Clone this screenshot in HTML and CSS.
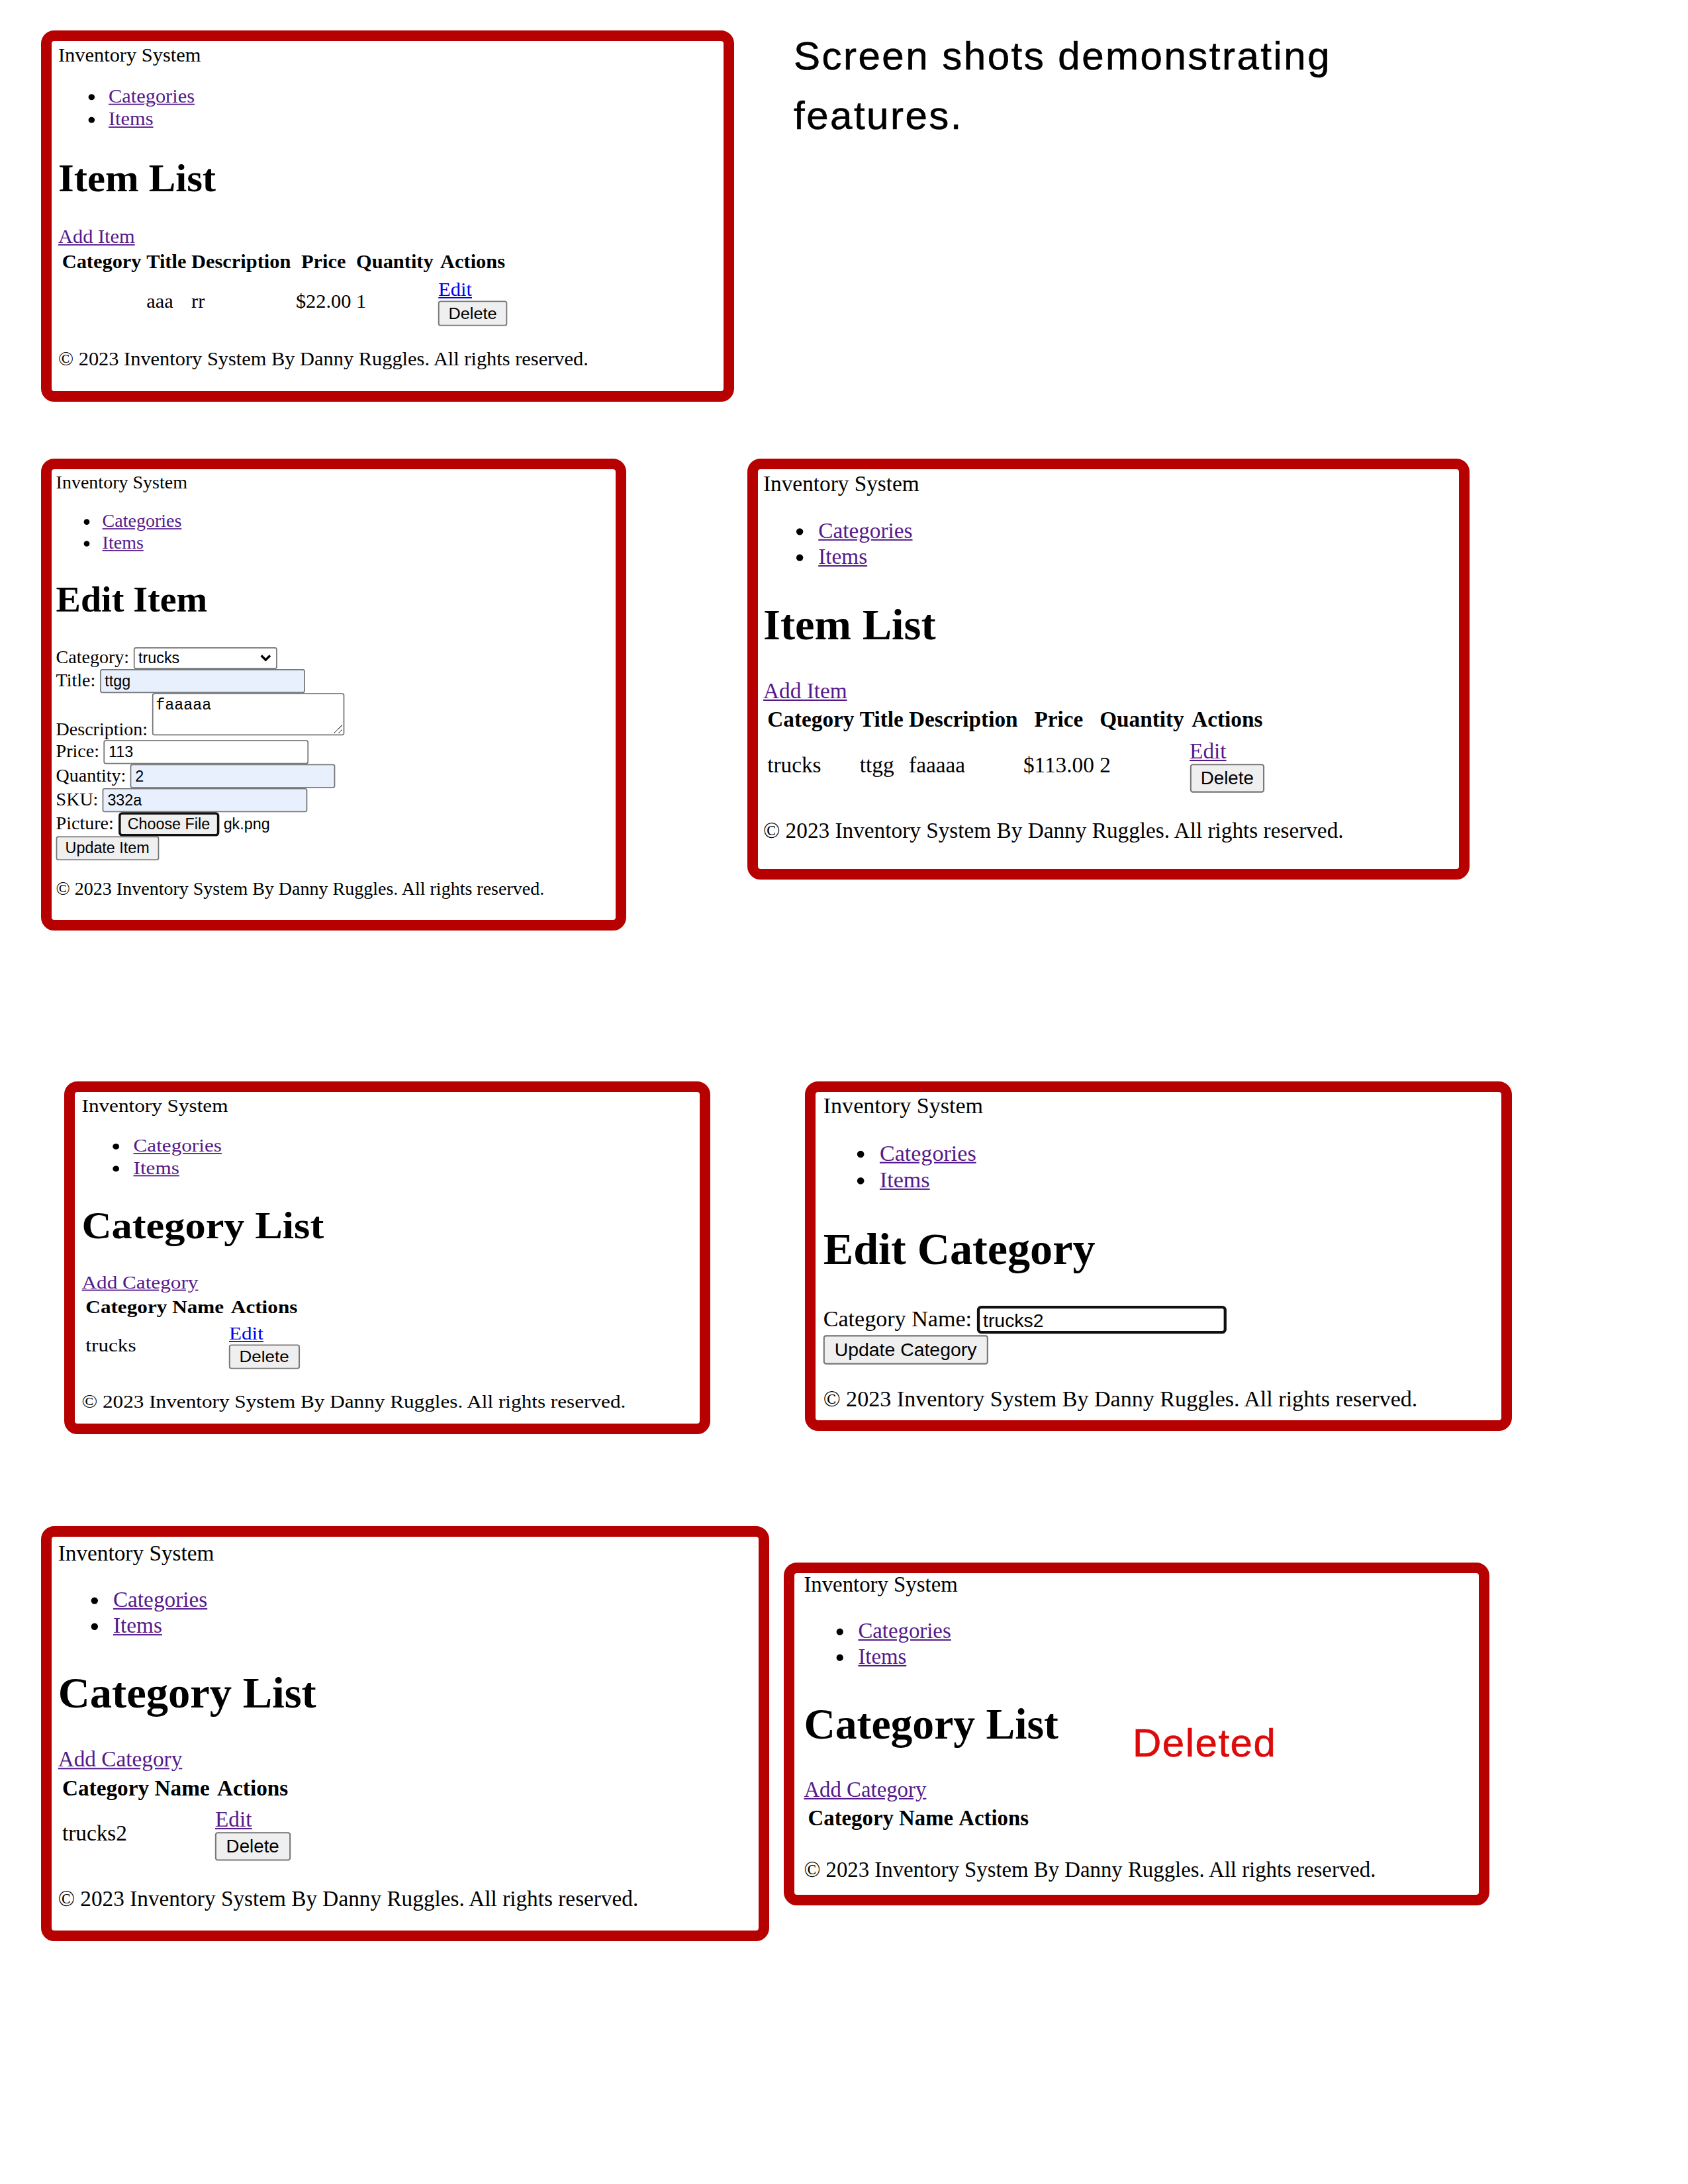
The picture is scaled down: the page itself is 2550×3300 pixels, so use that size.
FILE: index.html
```html
<!DOCTYPE html>
<html lang="en">
<head>
<meta charset="utf-8">
<title>Inventory System – screen shots</title>
<link rel="stylesheet" href="styles.css">
</head>
<body>
<main class="doc">

  <section class="row row-1">
    <div class="shot s1">
      <div class="page">
        <div class="brand">Inventory System</div>
        <ul class="nav"><li><a class="v" href="#">Categories</a></li><li><a class="v" href="#">Items</a></li></ul>
        <h1>Item List</h1>
        <a class="v" href="#">Add Item</a>
        <table>
          <thead><tr><th>Category</th><th>Title</th><th>Description</th><th>Price</th><th>Quantity</th><th>Actions</th></tr></thead>
          <tbody><tr><td></td><td>aaa</td><td>rr</td><td>$22.00</td><td>1</td><td><a href="#">Edit</a><form class="del"><button type="button" class="btn">Delete</button></form></td></tr></tbody>
        </table>
        <footer><p>© 2023 Inventory System By Danny Ruggles. All rights reserved.</p></footer>
      </div>
    </div>
    <h2 class="doc-title">Screen shots demonstrating<br>features.</h2>
  </section>

  <section class="row row-2">
    <div class="shot s2">
      <div class="page">
        <div class="brand">Inventory System</div>
        <ul class="nav"><li><a class="v" href="#">Categories</a></li><li><a class="v" href="#">Items</a></li></ul>
        <h1>Edit Item</h1>
        <form class="edit">
          <div class="frow first"><label>Category:</label> <span class="select">trucks<svg class="chev" viewBox="0 0 10 7" width="10" height="7"><path d="M1.2 1.2 L5 5 L8.8 1.2" fill="none" stroke="#000" stroke-width="2"/></svg></span></div>
          <div class="frow"><label>Title:</label> <input class="field auto" type="text" value="ttgg"></div>
          <div class="frow"><label>Description:</label> <textarea class="area">faaaaa</textarea></div>
          <div class="frow"><label>Price:</label> <input class="field" type="text" value="113"></div>
          <div class="frow"><label>Quantity:</label> <input class="field auto" type="text" value="2"></div>
          <div class="frow"><label>SKU:</label> <input class="field auto" type="text" value="332a"></div>
          <div class="frow"><label>Picture:</label> <span class="file"><button type="button" class="btn focus">Choose File</button> gk.png</span></div>
          <div class="frow"><button type="button" class="btn">Update Item</button></div>
        </form>
        <footer><p>© 2023 Inventory System By Danny Ruggles. All rights reserved.</p></footer>
      </div>
    </div>

    <div class="shot s3">
      <div class="page">
        <div class="brand">Inventory System</div>
        <ul class="nav"><li><a class="v" href="#">Categories</a></li><li><a class="v" href="#">Items</a></li></ul>
        <h1>Item List</h1>
        <a class="v" href="#">Add Item</a>
        <table>
          <thead><tr><th>Category</th><th>Title</th><th>Description</th><th>Price</th><th>Quantity</th><th>Actions</th></tr></thead>
          <tbody><tr><td>trucks</td><td>ttgg</td><td>faaaaa</td><td>$113.00</td><td>2</td><td><a class="v" href="#">Edit</a><form class="del"><button type="button" class="btn">Delete</button></form></td></tr></tbody>
        </table>
        <footer><p>© 2023 Inventory System By Danny Ruggles. All rights reserved.</p></footer>
      </div>
    </div>
  </section>

  <section class="row row-3">
    <div class="shot s4">
      <div class="page">
        <div class="brand">Inventory System</div>
        <ul class="nav"><li><a class="v" href="#">Categories</a></li><li><a class="v" href="#">Items</a></li></ul>
        <h1>Category List</h1>
        <a class="v" href="#">Add Category</a>
        <table>
          <thead><tr><th>Category Name</th><th>Actions</th></tr></thead>
          <tbody><tr><td>trucks</td><td><a href="#">Edit</a><form class="del"><button type="button" class="btn">Delete</button></form></td></tr></tbody>
        </table>
        <footer><p>© 2023 Inventory System By Danny Ruggles. All rights reserved.</p></footer>
      </div>
    </div>

    <div class="shot s5">
      <div class="page">
        <div class="brand">Inventory System</div>
        <ul class="nav"><li><a class="v" href="#">Categories</a></li><li><a class="v" href="#">Items</a></li></ul>
        <h1>Edit Category</h1>
        <form class="edit edit-cat">
          <div class="frow"><label>Category Name:</label> <input class="field focus-field" type="text" value="trucks2"></div>
          <div class="frow"><button type="button" class="btn">Update Category</button></div>
        </form>
        <footer><p>© 2023 Inventory System By Danny Ruggles. All rights reserved.</p></footer>
      </div>
    </div>
  </section>

  <section class="row row-4">
    <div class="shot s6">
      <div class="page">
        <div class="brand">Inventory System</div>
        <ul class="nav"><li><a class="v" href="#">Categories</a></li><li><a class="v" href="#">Items</a></li></ul>
        <h1>Category List</h1>
        <a class="v" href="#">Add Category</a>
        <table>
          <thead><tr><th>Category Name</th><th>Actions</th></tr></thead>
          <tbody><tr><td>trucks2</td><td><a class="v" href="#">Edit</a><form class="del"><button type="button" class="btn">Delete</button></form></td></tr></tbody>
        </table>
        <footer><p>© 2023 Inventory System By Danny Ruggles. All rights reserved.</p></footer>
      </div>
    </div>

    <div class="shot s7">
      <div class="page">
        <div class="brand">Inventory System</div>
        <ul class="nav"><li><a class="v" href="#">Categories</a></li><li><a class="v" href="#">Items</a></li></ul>
        <h1>Category List</h1>
        <a class="v" href="#">Add Category</a>
        <table>
          <thead><tr><th>Category Name</th><th>Actions</th></tr></thead>
          <tbody></tbody>
        </table>
        <footer><p>© 2023 Inventory System By Danny Ruggles. All rights reserved.</p></footer>
      </div>
      <span class="deleted">Deleted</span>
    </div>
  </section>

</main>
</body>
</html>
```

FILE: styles.css
```css
html, body {
  margin: 0;
  padding: 0;
  background: #fff;
}

.doc {
  width: 2550px;
  min-height: 3300px;
  padding-top: 46px;
  box-sizing: border-box;
  overflow: hidden;
}

.row {
  display: flex;
  align-items: flex-start;
}

.row-2 { margin-top: 86px; }
.row-3 { margin-top: 228px; }
.row-4 { margin-top: 139px; }

.doc-title {
  margin: -6px 0 0 90px;
  font: 400 60px/90px "Liberation Sans", Arial, sans-serif;
  letter-spacing: 2.5px;
  color: #000;
  -webkit-text-stroke: 0.6px #000;
}

/* screenshot frames */
.shot {
  position: relative;
  flex: none;
  box-sizing: border-box;
  border: 16px solid #b70000;
  border-radius: 20px;
  background: #fff;
  overflow: hidden;
}

.s1 { width: 1047px; height: 561px; margin-left: 62px;
  --tx: 10px; --ty: 5.8px; --sx: 1.9; --sy: 1.815; }
.s2 { width: 884px; height: 713px; margin-left: 62px;
  --tx: 6.6px; --ty: 4.4px; --sx: 1.75; --sy: 1.73; }
.s3 { width: 1091px; height: 636px; margin-left: 183px;
  --tx: 8px; --ty: 4.3px; --sx: 2.08; --sy: 2.07; }
.s4 { width: 976px; height: 533px; margin-left: 97px;
  --tx: 10.5px; --ty: 5.6px; --sx: 1.95; --sy: 1.765; }
.s5 { width: 1068px; height: 528px; margin-left: 143px;
  --tx: 11.7px; --ty: 2.3px; --sx: 2.13; --sy: 2.11; }
.s6 { width: 1100px; height: 627px; margin-left: 62px;
  --tx: 9.7px; --ty: 6.8px; --sx: 2.08; --sy: 2.063; }
.s7 { width: 1066px; height: 518px; margin-left: 22px; margin-top: 55px;
  --tx: 14.4px; --ty: -0.5px; --sx: 2.05; --sy: 2.05; }

.deleted {
  position: absolute;
  left: 511px;
  top: 227px;
  font: 400 60px/1 "Liberation Sans", Arial, sans-serif;
  letter-spacing: 1.5px;
  color: #dc0a0a;
  -webkit-text-stroke: 0.6px #dc0a0a;
}

/* the captured web page, at browser default sizes */
.page {
  width: 620px;
  transform-origin: 0 0;
  transform: translate(var(--tx), var(--ty)) scale(var(--sx), var(--sy));
  font-family: "Liberation Serif", "Times New Roman", serif;
  font-size: 16px;
  line-height: 1.15;
  color: #000;
  white-space: nowrap;
  display: flow-root;
}

.page a { color: #0000ee; }
.page a.v { color: #551a8b; }

.nav {
  margin: 16px 0;
  padding-left: 40px;
  list-style: disc;
}

.page h1 {
  font-size: 32px;
  font-weight: bold;
  margin: 21.44px 0;
}

.page table {
  border-spacing: 2px;
}

.page th,
.page td {
  padding: 1px;
  vertical-align: middle;
}

.page th { font-weight: bold; text-align: center; }
.page td { text-align: left; }

.del { display: block; margin: 0; }

.page footer p { margin: 16px 0; }

/* form controls */
.btn {
  font: 400 13.333px "Liberation Sans", Arial, sans-serif;
  line-height: normal;
  margin: 0;
  padding: 2px 7px;
  border: 1px solid #767676;
  border-radius: 2px;
  background: #efefef;
  color: #000;
}

.btn.focus {
  padding: 1px 6px;
  border: 2px solid #101010;
  border-radius: 3px;
}

.edit { display: block; margin: 0; }
.edit-cat { padding-top: 1.5px; }
.edit-cat .frow + .frow { padding-top: 0.5px; }
.frow.first { padding-top: 2px; }

.field {
  box-sizing: border-box;
  width: 177px;
  height: 21px;
  margin: 0;
  padding: 1px 3px;
  border: 1px solid #767676;
  border-radius: 2px;
  background: #fff;
  color: #000;
  font: 400 13.333px "Liberation Sans", Arial, sans-serif;
  line-height: normal;
  vertical-align: baseline;
}

.field.auto { background: #e8f0fe; }

.field.focus-field {
  height: 20px;
  padding: 0 2px;
  border: 2px solid #101010;
  border-radius: 3px;
}

.select {
  box-sizing: border-box;
  display: inline-flex;
  align-items: center;
  justify-content: space-between;
  width: 124px;
  height: 19px;
  padding: 0 4px 0 3px;
  border: 1px solid #767676;
  border-radius: 2px;
  background: #fff;
  font: 400 13.333px "Liberation Sans", Arial, sans-serif;
  line-height: normal;
  vertical-align: baseline;
}

.chev { display: block; }

.area {
  box-sizing: border-box;
  width: 166px;
  height: 37px;
  margin: 0;
  padding: 2px;
  border: 1px solid #767676;
  border-radius: 2px;
  font: 400 13.333px "Liberation Mono", "Courier New", monospace;
  line-height: normal;
  color: #000;
  background: #fff;
  vertical-align: baseline;
}

.file {
  font: 400 13.333px "Liberation Sans", Arial, sans-serif;
  line-height: normal;
}
```
